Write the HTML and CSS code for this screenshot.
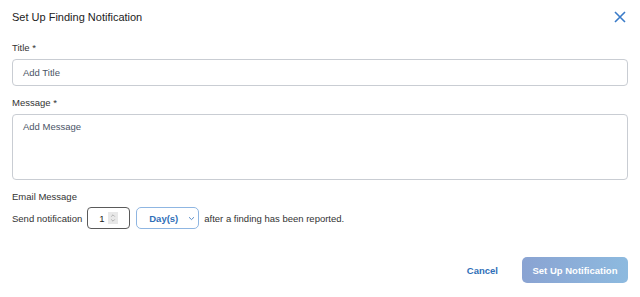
FILE: index.html
```html
<!DOCTYPE html>
<html>
<head>
<meta charset="utf-8">
<link rel="stylesheet" href="styles.css">
</head>
<body>
<div class="dialog">
  <div class="header">
    <div class="title">Set Up Finding Notification</div>
    <svg class="close" width="12" height="12" viewBox="0 0 12 12"><path d="M1 1L11 11M11 1L1 11" stroke="#3a7bc8" stroke-width="1.6" fill="none"/></svg>
  </div>
  <div class="label first">Title *</div>
  <div class="input">Add Title</div>
  <div class="label">Message *</div>
  <div class="textarea">Add Message</div>
  <div class="label">Email Message</div>
  <div class="row">
    <span class="text">Send notification</span>
    <div class="number">
      <span class="num">1</span>
      <span class="spin">
        <svg width="6" height="10" viewBox="0 0 6 10"><path d="M1.2 3.6L3 1.8L4.8 3.6M1.2 6.4L3 8.2L4.8 6.4" stroke="#9a9a9a" stroke-width="0.7" fill="none"/></svg>
      </span>
    </div>
    <div class="select">
      <span>Day(s)</span>
      <svg width="7" height="5" viewBox="0 0 7 5"><path d="M1 1.2L3.5 3.6L6 1.2" stroke="#4a80c0" stroke-width="0.9" fill="none"/></svg>
    </div>
    <span class="text">after a finding has been reported.</span>
  </div>
  <div class="footer">
    <span class="cancel">Cancel</span>
    <div class="primary">Set Up Notification</div>
  </div>
</div>
</body>
</html>
```
FILE: styles.css
```css
html, body {
  margin: 0;
  padding: 0;
  background: #ffffff;
}
body {
  font-family: "Liberation Sans", Arial, sans-serif;
  color: #2b2b2b;
}
.dialog {
  padding: 0 12px;
  display: flex;
  flex-direction: column;
}
.header {
  height: 34px;
  display: flex;
  align-items: center;
  justify-content: space-between;
}
.title {
  font-size: 11px;
  color: #222;
}
.close {
  margin-right: 2px;
}
.label {
  font-size: 9.5px;
  line-height: 12px;
  height: 12px;
  color: #333;
  margin-top: 11px;
}
.label.first {
  margin-top: 8px;
}
.input, .textarea {
  box-sizing: border-box;
  border: 1px solid #c9cdd3;
  border-radius: 4px;
  font-size: 9.5px;
  color: #4a5466;
  padding-left: 10px;
  margin-top: 5px;
}
.input {
  height: 27px;
  display: flex;
  align-items: center;
}
.textarea {
  height: 66px;
  padding-top: 6px;
  line-height: 12px;
}
.row {
  margin-top: 4px;
  height: 22px;
  display: flex;
  align-items: center;
  font-size: 9.5px;
  color: #333;
}
.number {
  box-sizing: border-box;
  margin-left: 5px;
  width: 43px;
  height: 22px;
  border: 1px solid #5a5a5a;
  border-radius: 4px;
  display: flex;
  align-items: center;
  padding-left: 11px;
}
.num {
  color: #222;
  width: 9px;
}
.spin {
  width: 10px;
  height: 12px;
  background: #e8e8e8;
  display: flex;
  align-items: center;
  justify-content: center;
}
.select {
  box-sizing: border-box;
  margin-left: 6px;
  width: 63px;
  height: 22px;
  border: 1px solid #8fb6e2;
  border-radius: 5px;
  display: flex;
  align-items: center;
  padding-left: 12px;
  gap: 10px;
  font-weight: bold;
  color: #2f6fb8;
}
.row .text:last-child {
  margin-left: 5px;
}
.footer {
  margin-top: 28px;
  display: flex;
  justify-content: flex-end;
  align-items: center;
  gap: 24px;
}
.cancel {
  font-size: 9.5px;
  font-weight: bold;
  color: #2f6fb8;
}
.primary {
  box-sizing: border-box;
  width: 106px;
  height: 26px;
  border-radius: 5px;
  background: linear-gradient(90deg, #8aa3d2, #8dbadf);
  color: #fff;
  font-size: 9.5px;
  font-weight: bold;
  display: flex;
  align-items: center;
  justify-content: center;
}
```
